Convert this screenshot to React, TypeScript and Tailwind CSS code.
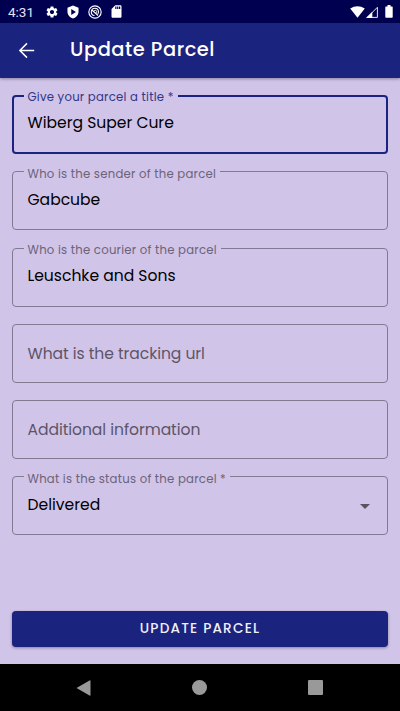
import { MdArrowDropDown, MdSdCard, MdSettings } from "react-icons/md";

type FieldProps = {
  label: string;
  value?: string;
  focused?: boolean;
  select?: boolean;
  notchClass?: string;
};

function Field({ label, value, focused, select, notchClass }: FieldProps) {
  const frame = focused ? "border-2 border-[#1a237e] pl-[13.5px]" : "border border-[#827a91] pl-[14.5px]";
  return (
    <div className="relative h-[59px] shrink-0">
      <div className={`flex h-full items-center justify-between rounded-[4px] pr-[10px] ${frame}`}>
        {value ? (
          <span className={`whitespace-nowrap text-[15.57px] leading-6 text-black ${focused ? "-mt-[4px]" : "-mt-[2px]"}`}>{value}</span>
        ) : (
          <span className="mt-[1.4px] whitespace-nowrap text-[15.57px] leading-6 tracking-[-0.05px] text-[#5c5568]">{label}</span>
        )}
        {select && <MdArrowDropDown className="mt-[1px] size-6 text-[#59535f]" />}
      </div>
      {value && (
        <div className={`absolute left-[12px] h-[18px] bg-[#d1c4e9] pl-[3.5px] ${notchClass}`}>
          <span
            className={`block whitespace-nowrap pt-[1px] text-[11.68px] leading-[18px] tracking-[0.25px] ${focused ? "text-[#303788]" : "text-[#6b6378]"}`}
          >
            {label}
          </span>
        </div>
      )}
    </div>
  );
}

function StatusBar() {
  return (
    <div className="flex h-[23px] shrink-0 items-center bg-[#000051] pl-[8px] pr-[7px] text-white">
      <span className="mt-px w-[37px] font-['Roboto',sans-serif] text-[13.5px] leading-4 text-[#e4e4ee]">4:31</span>
      <MdSettings className="size-[14px]" />
      <svg className="ml-[7px] size-[14px]" viewBox="0 0 24 24">
        <path fill="currentColor" fillRule="evenodd" d="M12 1 2.500 4.500V11c0 5.6 3.8 10.3 9.500 12 5.700-1.7 9.500-6.4 9.500-12V4.500L12 1Zm-3 6 8 5-8 5V7Z" />
      </svg>
      <svg className="ml-[8px] size-[14px]" viewBox="0 0 28 28" fill="none" stroke="currentColor">
        <circle cx="14" cy="14" r="12.300" strokeWidth="2.300" />
        <path strokeWidth="2.200" d="M13 21A7.200 7.200 0 1 1 21 13.500Q21 16 19.500 18M8.500 10.500 20 21" />
        <path strokeWidth="2" d="M12 12.500A2.800 2.800 0 1 1 15.500 16" />
      </svg>
      <MdSdCard className="ml-[7px] size-[15px]" />
      <svg className="ml-auto h-[12px] w-[15px]" viewBox="0 0 15 12">
        <path fill="currentColor" d="M.2 2.500Q7.500-2.100 14.800 2.500L7.500 11.700Z" />
      </svg>
      <svg className="ml-[1px] h-[12px] w-[12px]" viewBox="0 0 12 12">
        <path fill="none" stroke="currentColor" strokeWidth="0.9" d="M1.300 11.400H11.400V1.300Z" />
        <path fill="currentColor" d="M0 12 6.300 5.700V12Z" />
      </svg>
      <svg className="ml-[7px] h-[13px] w-[8px]" viewBox="0 0 8 13">
        <path fill="currentColor" d="M2.500 0h3v1.500H7q.7 0 .7.700V12q0 .7-.7.700H1q-.7 0-.7-.7V2.200q0-.7.700-.7h1.500Z" />
      </svg>
    </div>
  );
}

export default function App() {
  return (
    <div className="flex h-[711px] w-[400px] flex-col overflow-hidden bg-[#d1c4e9] font-['Poppins','Inter',sans-serif]">
      <StatusBar />
      <header className="flex h-[55px] shrink-0 items-center bg-[#1a237e] pl-[18px] text-white shadow-[0_1px_3px_rgba(0,0,0,0.35)]">
        <svg className="size-[17px]" viewBox="0 0 17 17" fill="none" stroke="currentColor" strokeWidth="1.500">
          <path d="M16.200 8.500H1.900M9 1.400 1.900 8.500 9 15.600" />
        </svg>
        <h1 className="-mt-[2px] ml-[35px] whitespace-nowrap text-[19.46px] font-medium leading-7 tracking-[0.52px]">Update Parcel</h1>
      </header>
      <main className="flex grow flex-col px-[12px] pt-[17px]">
        <div className="flex flex-col gap-[17.3px]">
          <Field focused label="Give your parcel a title *" value="Wiberg Super Cure" notchClass="-top-[8px] w-[154px]" />
          <Field label="Who is the sender of the parcel" value="Gabcube" notchClass="-top-[7.2px] w-[196px]" />
          <Field label="Who is the courier of the parcel" value="Leuschke and Sons" notchClass="-top-[7.2px] w-[197px]" />
          <Field label="What is the tracking url" />
          <Field label="Additional information" />
          <Field select label="What is the status of the parcel *" value="Delivered" notchClass="-top-[7px] w-[206px]" />
        </div>
        <button className="mb-[17px] mt-auto flex h-[36px] shrink-0 items-center justify-center rounded-[4px] bg-[#1a237e] text-[13.62px] font-medium text-[#f1effa] tracking-[1.200px] shadow-[0_1px_3px_rgba(0,0,0,0.35)]">
          UPDATE PARCEL
        </button>
      </main>
      <nav className="flex h-[47px] shrink-0 items-center justify-between bg-black pl-[76px] pr-[77px]">
        <svg className="h-[16px] w-[15px] text-[#999]" viewBox="0 0 15 16">
          <path fill="currentColor" d="M.5 8 13.500.4q1-.4 1 .6v14q0 1-1 .6Z" />
        </svg>
        <span className="size-[15px] rounded-full bg-[#999]" />
        <span className="size-[15px] rounded-[1px] bg-[#999]" />
      </nav>
    </div>
  );
}
